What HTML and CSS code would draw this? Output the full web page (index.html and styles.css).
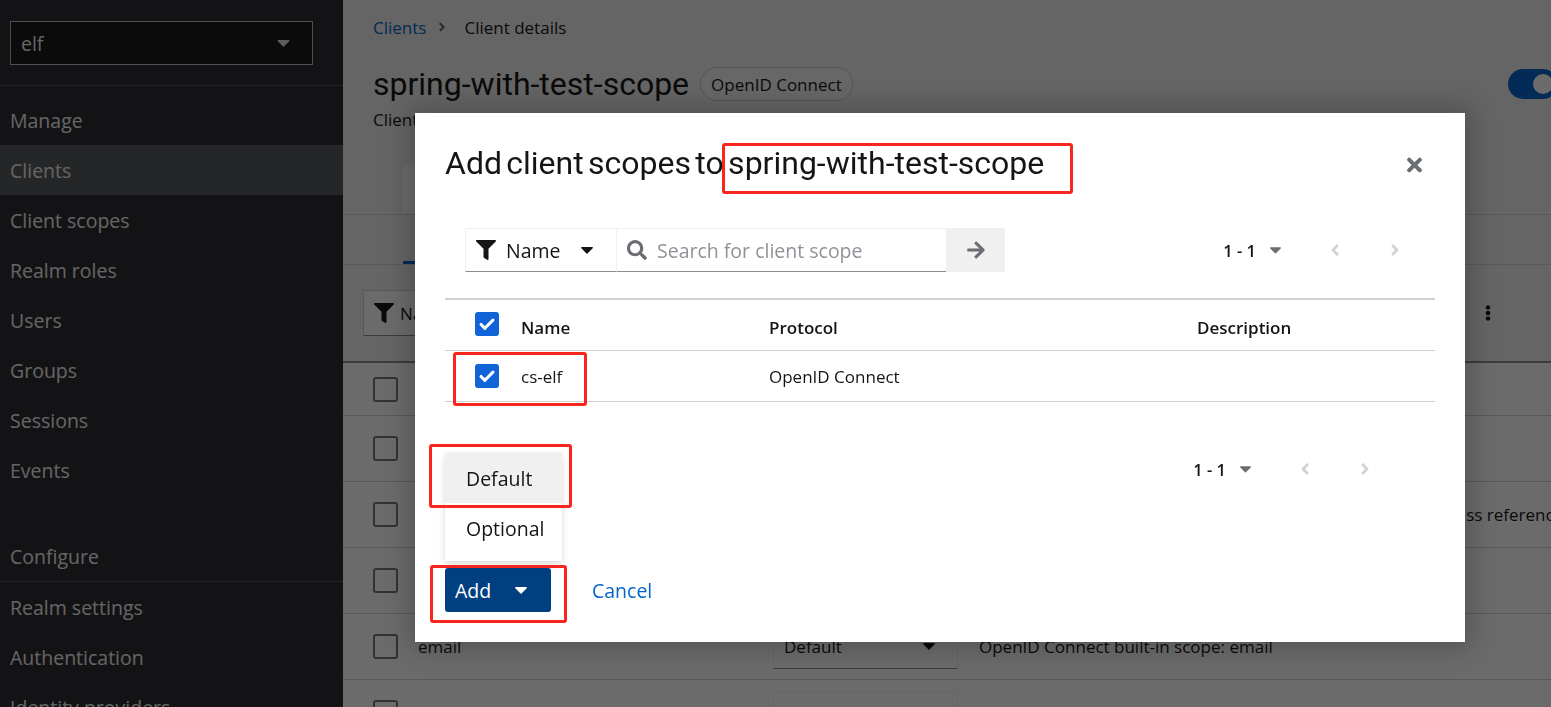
FILE: index.html
```html
<!DOCTYPE html>
<html lang="en">
<head>
<meta charset="utf-8">
<title>Client details - spring-with-test-scope</title>
<link rel="stylesheet" href="styles.css">
</head>
<body>
<div class="page">
  <nav class="sidebar">
    <div class="realm">
      <div class="realm-select">
        <span>elf</span>
        <svg class="caret caret-light" viewBox="0 0 12 7"><path d="M0.8 0h10.4c.7 0 1 .8.5 1.3L6.5 6.5c-.3.3-.7.3-1 0L.3 1.3C-.2.8.1 0 .8 0z"/></svg>
      </div>
    </div>
    <div class="nav-section">
      <div class="nav-title">Manage</div>
      <a class="nav-item active">Clients</a>
      <a class="nav-item">Client scopes</a>
      <a class="nav-item">Realm roles</a>
      <a class="nav-item">Users</a>
      <a class="nav-item">Groups</a>
      <a class="nav-item">Sessions</a>
      <a class="nav-item">Events</a>
    </div>
    <div class="nav-section configure">
      <div class="nav-title bordered">Configure</div>
      <a class="nav-item">Realm settings</a>
      <a class="nav-item">Authentication</a>
      <a class="nav-item">Identity providers</a>
    </div>
  </nav>

  <main class="main">
    <div class="content">
      <section class="page-header">
        <div class="breadcrumb">
          <a class="bc-link">Clients</a>
          <svg class="bc-sep" viewBox="0 0 256 512"><path d="M224.3 273l-136 136c-9.4 9.4-24.6 9.4-33.9 0l-22.6-22.6c-9.4-9.4-9.4-24.6 0-33.9l96.4-96.4-96.4-96.4c-9.4-9.4-9.4-24.6 0-33.9L54.3 103c9.4-9.4 24.6-9.4 33.9 0l136 136c9.5 9.4 9.5 24.6.1 34z"/></svg>
          <span>Client details</span>
        </div>
        <div class="title-row">
          <h1 class="page-title">spring-with-test-scope</h1>
          <span class="badge">OpenID Connect</span>
          <div class="header-actions">
            <span class="toggle"><span class="knob"></span></span>
            <span class="toggle-label">Enabled</span>
          </div>
        </div>
        <p class="subtitle">Clients are applications and services that can request authentication of a user.</p>
      </section>

      <div class="tabs">
        <span class="tab-scroll"></span>
        <span class="tab">Settings</span>
        <span class="tab">Keys</span>
        <span class="tab">Credentials</span>
        <span class="tab">Roles</span>
        <span class="tab current">Client scopes</span>
        <span class="tab">Authorization</span>
        <span class="tab">Sessions</span>
        <span class="tab">Advanced</span>
      </div>
      <div class="subtabs">
        <span class="subtab current">Setup</span>
        <span class="subtab">Evaluate</span>
      </div>

      <div class="bg-toolbar">
        <div class="bg-filter">
          <svg class="ico-filter" viewBox="0 0 512 512"><path d="M487.976 0H24.028C2.71 0-8.047 25.866 7.058 40.971L192 225.941V432c0 7.831 3.821 15.17 10.237 19.662l80 55.98C298.02 518.69 320 507.493 320 487.98V225.941l184.947-184.97C520.021 25.896 509.338 0 487.976 0z"/></svg>
          <span>Name</span>
        </div>
        <div class="bg-search">Search by name</div>
        <span class="bg-btn">Add client scope</span>
        <svg class="kebab" viewBox="0 0 192 512"><path d="M96 184c39.8 0 72 32.2 72 72s-32.2 72-72 72-72-32.2-72-72 32.2-72 72-72zM24 80c0 39.8 32.2 72 72 72s72-32.2 72-72S135.8 8 96 8 24 40.2 24 80zm0 352c0 39.8 32.2 72 72 72s72-32.2 72-72-32.2-72-72-72-72 32.2-72 72z"/></svg>
      </div>

      <div class="bg-table">
        <div class="bg-row short">
          <span class="cb"></span>
          <span>spring-with-test-scope-dedicated</span>
          <span>Dedicated</span>
          <span class="desc">This is a client scope for dedicated mappers</span>
        </div>
        <div class="bg-row">
          <span class="cb"></span>
          <span>address</span>
          <span class="bg-select">Optional <svg class="caret" viewBox="0 0 12 7"><path d="M0.8 0h10.4c.7 0 1 .8.5 1.3L6.5 6.5c-.3.3-.7.3-1 0L.3 1.3C-.2.8.1 0 .8 0z"/></svg></span>
          <span class="desc">OpenID Connect built-in scope: address</span>
        </div>
        <div class="bg-row">
          <span class="cb"></span>
          <span>acr</span>
          <span class="bg-select">Default <svg class="caret" viewBox="0 0 12 7"><path d="M0.8 0h10.4c.7 0 1 .8.5 1.3L6.5 6.5c-.3.3-.7.3-1 0L.3 1.3C-.2.8.1 0 .8 0z"/></svg></span>
          <span class="desc">OpenID Connect scope for add acr (authentication context class reference) to the token</span>
        </div>
        <div class="bg-row">
          <span class="cb"></span>
          <span>basic</span>
          <span class="bg-select">Default <svg class="caret" viewBox="0 0 12 7"><path d="M0.8 0h10.4c.7 0 1 .8.5 1.3L6.5 6.5c-.3.3-.7.3-1 0L.3 1.3C-.2.8.1 0 .8 0z"/></svg></span>
          <span class="desc">OpenID Connect scope for basic claims</span>
        </div>
        <div class="bg-row">
          <span class="cb"></span>
          <span>email</span>
          <span class="bg-select">Default <svg class="caret" viewBox="0 0 12 7"><path d="M0.8 0h10.4c.7 0 1 .8.5 1.3L6.5 6.5c-.3.3-.7.3-1 0L.3 1.3C-.2.8.1 0 .8 0z"/></svg></span>
          <span class="desc">OpenID Connect built-in scope: email</span>
        </div>
        <div class="bg-row">
          <span class="cb"></span>
          <span>microprofile-jwt</span>
          <span class="bg-select">Optional <svg class="caret" viewBox="0 0 12 7"><path d="M0.8 0h10.4c.7 0 1 .8.5 1.3L6.5 6.5c-.3.3-.7.3-1 0L.3 1.3C-.2.8.1 0 .8 0z"/></svg></span>
          <span class="desc">Microprofile - JWT built-in scope</span>
        </div>
      </div>
    </div>
  </main>
</div>

<div class="backdrop"></div>

<div class="modal" role="dialog">
  <h2 class="modal-title">Add client scopes to spring-with-test-scope</h2>
  <button class="close" aria-label="Close">
    <svg viewBox="0 0 352 512"><path d="M242.72 256l100.07-100.07c12.28-12.28 12.28-32.19 0-44.48l-22.24-22.24c-12.28-12.28-32.19-12.28-44.48 0L176 189.28 75.93 89.21c-12.28-12.28-32.19-12.28-44.48 0L9.21 111.45c-12.28 12.28-12.28 32.19 0 44.48L109.28 256 9.21 356.07c-12.28 12.28-12.28 32.19 0 44.48l22.24 22.24c12.28 12.28 32.2 12.28 44.48 0L176 322.72l100.07 100.07c12.28 12.28 32.2 12.28 44.48 0l22.24-22.24c12.28-12.28 12.28-32.19 0-44.48L242.72 256z"/></svg>
  </button>

  <div class="m-toolbar">
    <div class="search-group">
      <div class="filter-toggle">
        <svg class="ico-filter" viewBox="0 0 512 512"><path d="M487.976 0H24.028C2.71 0-8.047 25.866 7.058 40.971L192 225.941V432c0 7.831 3.821 15.17 10.237 19.662l80 55.98C298.02 518.69 320 507.493 320 487.98V225.941l184.947-184.97C520.021 25.896 509.338 0 487.976 0z"/></svg>
        <span class="filter-label">Name</span>
        <svg class="caret caret-dark" viewBox="0 0 12 7"><path d="M0.8 0h10.4c.7 0 1 .8.5 1.3L6.5 6.5c-.3.3-.7.3-1 0L.3 1.3C-.2.8.1 0 .8 0z"/></svg>
      </div>
      <div class="search-input">
        <svg class="ico-search" viewBox="0 0 512 512"><path d="M505 442.7L405.3 343c-4.5-4.5-10.6-7-17-7H372c27.6-35.3 44-79.7 44-128C416 93.1 322.9 0 208 0S0 93.1 0 208s93.1 208 208 208c48.3 0 92.7-16.4 128-44v16.3c0 6.4 2.5 12.5 7 17l99.7 99.7c9.4 9.4 24.6 9.4 33.9 0l28.3-28.3c9.4-9.4 9.4-24.6.1-34zM208 336c-70.7 0-128-57.2-128-128 0-70.7 57.2-128 128-128 70.7 0 128 57.2 128 128 0 70.7-57.2 128-128 128z"/></svg>
        <span class="placeholder">Search for client scope</span>
      </div>
      <button class="search-go" aria-label="Search">
        <svg viewBox="0 0 448 512"><path d="M190.5 66.9l22.2-22.2c9.4-9.4 24.6-9.4 33.9 0L441 239c9.4 9.4 9.4 24.6 0 33.9L246.6 467.3c-9.4 9.4-24.6 9.4-33.9 0l-22.2-22.2c-9.5-9.5-9.3-25 .4-34.3L311.4 296H24c-13.3 0-24-10.7-24-24v-32c0-13.3 10.7-24 24-24h287.4L190.9 101.2c-9.8-9.3-10-24.8-.4-34.3z"/></svg>
      </button>
    </div>
    <div class="pagination">
      <span class="pg-toggle"><b>1 - 1</b><svg class="caret caret-grey" viewBox="0 0 12 7"><path d="M0.8 0h10.4c.7 0 1 .8.5 1.3L6.5 6.5c-.3.3-.7.3-1 0L.3 1.3C-.2.8.1 0 .8 0z"/></svg></span>
      <span class="pg-nav"><svg viewBox="0 0 256 512"><path d="M31.7 239l136-136c9.4-9.4 24.6-9.4 33.9 0l22.6 22.6c9.4 9.4 9.4 24.6 0 33.9L127.9 256l96.4 96.4c9.4 9.4 9.4 24.6 0 33.9L201.7 409c-9.4 9.4-24.6 9.4-33.9 0l-136-136c-9.5-9.4-9.5-24.6-.1-34z"/></svg></span>
      <span class="pg-nav"><svg viewBox="0 0 256 512"><path d="M224.3 273l-136 136c-9.4 9.4-24.6 9.4-33.9 0l-22.6-22.6c-9.4-9.4-9.4-24.6 0-33.9l96.4-96.4-96.4-96.4c-9.4-9.4-9.4-24.6 0-33.9L54.3 103c9.4-9.4 24.6-9.4 33.9 0l136 136c9.5 9.4 9.5 24.6.1 34z"/></svg></span>
    </div>
  </div>

  <div class="m-table">
    <div class="m-row m-head">
      <span class="check checked"><svg viewBox="0 0 24 24"><path d="M5.5 12.5l4.2 4.2L18.5 7.8"/></svg></span>
      <span>Name</span>
      <span>Protocol</span>
      <span>Description</span>
    </div>
    <div class="m-row">
      <span class="check checked"><svg viewBox="0 0 24 24"><path d="M5.5 12.5l4.2 4.2L18.5 7.8"/></svg></span>
      <span>cs-elf</span>
      <span>OpenID Connect</span>
      <span></span>
    </div>
  </div>

  <div class="m-bottom">
    <div class="pagination">
      <span class="pg-toggle"><b>1 - 1</b><svg class="caret caret-grey" viewBox="0 0 12 7"><path d="M0.8 0h10.4c.7 0 1 .8.5 1.3L6.5 6.5c-.3.3-.7.3-1 0L.3 1.3C-.2.8.1 0 .8 0z"/></svg></span>
      <span class="pg-nav"><svg viewBox="0 0 256 512"><path d="M31.7 239l136-136c9.4-9.4 24.6-9.4 33.9 0l22.6 22.6c9.4 9.4 9.4 24.6 0 33.9L127.9 256l96.4 96.4c9.4 9.4 9.4 24.6 0 33.9L201.7 409c-9.4 9.4-24.6 9.4-33.9 0l-136-136c-9.5-9.4-9.5-24.6-.1-34z"/></svg></span>
      <span class="pg-nav"><svg viewBox="0 0 256 512"><path d="M224.3 273l-136 136c-9.4 9.4-24.6 9.4-33.9 0l-22.6-22.6c-9.4-9.4-9.4-24.6 0-33.9l96.4-96.4-96.4-96.4c-9.4-9.4-9.4-24.6 0-33.9L54.3 103c9.4-9.4 24.6-9.4 33.9 0l136 136c9.5 9.4 9.5 24.6.1 34z"/></svg></span>
    </div>
  </div>

  <div class="m-footer">
    <div class="add-wrap">
      <ul class="menu">
        <li class="menu-item hover">Default</li>
        <li class="menu-item">Optional</li>
      </ul>
      <button class="btn-primary">Add <svg class="caret caret-white" viewBox="0 0 12 7"><path d="M0.8 0h10.4c.7 0 1 .8.5 1.3L6.5 6.5c-.3.3-.7.3-1 0L.3 1.3C-.2.8.1 0 .8 0z"/></svg></button>
    </div>
    <button class="btn-link">Cancel</button>
  </div>

  <span class="mark mark-title"></span>
  <span class="mark mark-row"></span>
  <span class="mark mark-default"></span>
  <span class="mark mark-add"></span>
</div>
</body>
</html>
```

FILE: styles.css
```css
* { box-sizing: border-box; }

html, body {
  margin: 0;
  width: 1551px;
  height: 707px;
  overflow: hidden;
}

body {
  font-family: "Open Sans", "Noto Sans", sans-serif;
  color: #151515;
  background: #f0f0f0;
}

svg { display: block; fill: currentColor; }

/* ---------- layout ---------- */
.page {
  display: flex;
  height: 707px;
}

/* ---------- sidebar ---------- */
.sidebar {
  width: 343px;
  flex: none;
  background: #2a2b2e;
  color: #f0f0f0;
  font-size: 19.5px;
}

.realm {
  padding: 21px 30px 20px 10px;
  border-bottom: 1px solid #4f5255;
}

.realm-select {
  height: 44px;
  border: 1px solid #b8bbbe;
  background: #161618;
  display: flex;
  align-items: center;
  justify-content: space-between;
  padding: 0 22px 0 10px;
}

.caret { width: 12px; height: 7px; }
.caret-light { color: #e0e0e0; width: 13px; }

.nav-section { padding-top: 9px; }
.nav-section.configure { padding-top: 0; margin-top: 37px; }

.nav-title,
.nav-item {
  height: 50px;
  display: flex;
  align-items: center;
  padding-left: 10px;
}

.nav-title.bordered { border-bottom: 1px solid #4f5255; }
.nav-item.active { background: #55575a; }

/* ---------- main (behind modal) ---------- */
.main {
  flex: 1;
  min-width: 0;
  overflow: hidden;
}

.content {
  width: 1297px;
  font-size: 17px;
}

.page-header { padding: 15px 0 0 30px; }

.breadcrumb {
  display: flex;
  align-items: center;
  height: 24px;
}

.bc-link { color: #0066cc; }
.bc-sep {
  width: 8px;
  height: 14px;
  color: #6a6e73;
  margin: 0 18px 0 12px;
}

.title-row {
  display: flex;
  align-items: center;
  margin-top: 25px;
  height: 40px;
}

.page-title {
  margin: 0;
  font-family: Roboto, "Open Sans", sans-serif;
  font-weight: 400;
  font-size: 32px;
  line-height: 40px;
}

.badge {
  margin-left: 11px;
  height: 34px;
  padding: 0 10px;
  border: 1px solid #c8c8c8;
  border-radius: 17px;
  display: flex;
  align-items: center;
  background: #f5f5f5;
}

.header-actions {
  margin-left: auto;
  display: flex;
  align-items: center;
  gap: 16px;
}

.toggle {
  width: 50px;
  height: 30px;
  border-radius: 15px;
  background: #0066cc;
  display: flex;
  align-items: center;
  justify-content: flex-end;
  padding-right: 5px;
}

.knob {
  width: 20px;
  height: 20px;
  border-radius: 50%;
  background: #fff;
}

.toggle-label { width: 66px; }

.subtitle {
  margin: 4px 0 0;
  line-height: 24px;
}

.tabs {
  margin-top: 13px;
  padding: 20px 0 0 60px;
  height: 70px;
  display: flex;
  border-bottom: 1px solid #d2d2d2;
}

.tab-scroll {
  width: 40px;
  height: 49px;
  background: #ffffff;
}

.tab {
  padding: 0 20px;
  display: flex;
  align-items: center;
  height: 49px;
}

.subtabs {
  height: 50px;
  padding-left: 60px;
  display: flex;
  border-bottom: 1px solid #d2d2d2;
}

.subtab {
  display: flex;
  align-items: center;
  padding: 0 20px;
  height: 49px;
}

.subtab.current { box-shadow: inset 0 -3px 0 #0066cc; }

.bg-toolbar {
  display: flex;
  align-items: center;
  padding: 25px 140px 25px 20px;
}

.bg-filter {
  height: 46px;
  width: 150px;
  display: flex;
  align-items: center;
  gap: 6px;
  padding-left: 10px;
  border: 1px solid #d2d2d2;
  border-bottom-color: #8a8d90;
  background: #fff;
}

.ico-filter { width: 20px; height: 20px; color: #151515; }

.bg-search {
  width: 300px;
  height: 46px;
  display: flex;
  align-items: center;
  padding-left: 40px;
  border: 1px solid #d2d2d2;
  border-left: 0;
  color: #6a6e73;
  background: #fff;
}

.bg-btn { margin-left: 20px; }

.kebab {
  margin-left: auto;
  width: 6px;
  height: 22px;
  color: #151515;
  margin-right: 9px;
}

.bg-table { border-top: 2px solid #8a8d90; }

.bg-row {
  display: grid;
  grid-template-columns: 45px 355px 206px max-content;
  align-items: center;
  padding-left: 30px;
  height: 66px;
  border-bottom: 1px solid #d2d2d2;
  background: #fff;
  white-space: nowrap;
}

.bg-row.short { height: 53px; }

.cb {
  width: 25px;
  height: 25px;
  border: 2px solid #767676;
  border-radius: 3px;
  background: #fff;
}

.bg-select {
  width: 185px;
  height: 44px;
  display: flex;
  align-items: center;
  justify-content: space-between;
  padding: 0 22px 0 10px;
  border: 1px solid #f0f0f0;
  border-bottom-color: #8a8d90;
}

.bg-select .caret { color: #151515; }

/* ---------- backdrop & modal ---------- */
.backdrop {
  position: fixed;
  inset: 0;
  background: rgba(3, 3, 3, 0.59);
}

.modal {
  position: fixed;
  left: 415px;
  top: 113px;
  width: 1050px;
  background: #ffffff;
  padding: 30px;
  box-shadow: 0 0 24px 6px rgba(3, 3, 3, 0.22);
  font-size: 17px;
}

.modal-title {
  margin: 0;
  font-family: Roboto, "Open Sans", sans-serif;
  font-weight: 400;
  font-size: 32px;
  line-height: 40px;
  word-spacing: -3.6px;
  color: #151515;
}

.close {
  position: absolute;
  top: 41px;
  right: 43px;
  width: 15px;
  height: 22px;
  padding: 0;
  border: 0;
  background: none;
  color: #6a6e73;
}

.close svg { width: 15px; height: 22px; }

button { font: inherit; cursor: pointer; }

.m-toolbar {
  margin-top: 45px;
  height: 44px;
  padding: 0 20px;
  display: flex;
  align-items: center;
  justify-content: space-between;
}

.search-group { display: flex; height: 44px; }

.filter-toggle {
  width: 152px;
  display: flex;
  align-items: center;
  padding: 0 23px 0 10px;
  border: 1px solid #f0f0f0;
  border-bottom-color: #8a8d90;
  font-size: 19.5px;
}

.filter-label { margin-left: 10px; flex: 1; }
.caret-dark { color: #151515; }

.search-input {
  width: 329px;
  display: flex;
  align-items: center;
  padding-left: 10px;
  border-top: 1px solid #f0f0f0;
  border-bottom: 1px solid #8a8d90;
  font-size: 19.5px;
}

.ico-search { width: 20px; height: 20px; color: #6a6e73; }
.placeholder { margin-left: 10px; color: #8f9296; }

.search-go {
  width: 59px;
  border: 0;
  background: #f0f0f0;
  color: #6a6e73;
  display: flex;
  align-items: center;
  justify-content: center;
  padding: 0;
}

.search-go svg { width: 18px; height: 20px; }

.pagination {
  display: flex;
  align-items: center;
  height: 44px;
}

.pg-toggle {
  display: flex;
  align-items: center;
  padding-right: 14px;
}

.pg-toggle b { font-weight: 600; font-size: 16.5px; }
.caret-grey { color: #6a6e73; margin-left: 14px; width: 11px; }

.pg-nav {
  width: 40px;
  margin-left: 20px;
  display: flex;
  justify-content: center;
  color: #d2d2d2;
}

.pg-nav svg { width: 10px; height: 18px; }

.m-table {
  margin-top: 26px;
  border-top: 2px solid #d2d2d2;
}

.m-row {
  display: grid;
  grid-template-columns: 46px 248px 428px 1fr;
  align-items: center;
  height: 51px;
  border-bottom: 1px solid #d2d2d2;
  padding-left: 30px;
}

.m-head { font-weight: 600; }
.m-head span { padding-top: 4px; }
.m-head .check { padding-top: 0; margin-top: -3px; }

.check {
  width: 24px;
  height: 24px;
  border-radius: 3px;
  background: #1064d8;
  display: flex;
  align-items: center;
  justify-content: center;
}

.check svg {
  width: 22px;
  height: 22px;
  fill: none;
  stroke: #fff;
  stroke-width: 3.3;
  stroke-linecap: round;
  stroke-linejoin: round;
}

.m-bottom {
  margin-top: 42px;
  height: 50px;
  display: flex;
  align-items: center;
  justify-content: flex-end;
  padding-right: 50px;
}

.m-footer {
  margin-top: 74px;
  display: flex;
  align-items: center;
}

.add-wrap { position: relative; }

.menu {
  position: absolute;
  left: 0;
  bottom: calc(100% + 7px);
  width: 117px;
  margin: 0;
  padding: 0 0 8px;
  list-style: none;
  background: #fff;
  box-shadow: 0 4px 8px 0 rgba(3, 3, 3, 0.12), 0 0 4px 0 rgba(3, 3, 3, 0.06);
  font-size: 19.5px;
}

.menu-item {
  height: 50px;
  display: flex;
  align-items: center;
  padding-left: 21px;
}

.menu-item.hover { background: #f0f0f0; }

.btn-primary {
  width: 106px;
  height: 44px;
  border: 0;
  border-radius: 3px;
  background: #004080;
  color: #fff;
  display: flex;
  align-items: center;
  justify-content: space-between;
  padding: 0 24px 0 10px;
  font-size: 19.5px;
}

.caret-white { color: #fff; }

.btn-link {
  margin-left: 25px;
  padding: 0 16px;
  height: 44px;
  border: 0;
  background: none;
  color: #0066cc;
  font-size: 19.5px;
}

/* ---------- red annotation marks ---------- */
.mark {
  position: absolute;
  border: 3px solid #f8261d;
  border-radius: 3px;
}

.mark-title { left: 307px; top: 30px; width: 351px; height: 51px; }
.mark-row { left: 38px; top: 239px; width: 134px; height: 54px; }
.mark-default { left: 14px; top: 331px; width: 143px; height: 64px; }
.mark-add { left: 15px; top: 452px; width: 137px; height: 58px; }
```
